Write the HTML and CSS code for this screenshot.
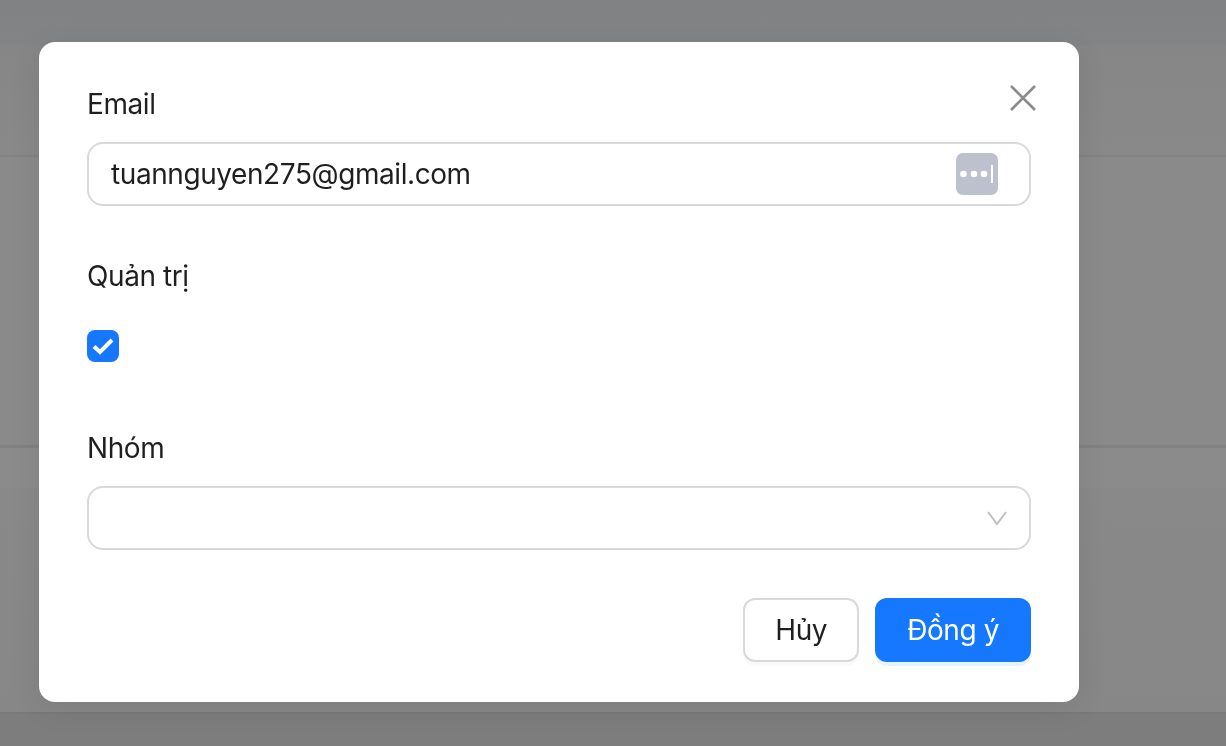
FILE: index.html
```html
<!doctype html>
<html>
	<head>
		<title>Email</title>
		<meta charset="utf-8">
		<link rel="stylesheet" href="styles.css">
	</head>
	<body>
		<!-- trang phía sau -->
		<div class="page">
			<div class="band bandTop"></div>
			<div class="band bandHead"></div>
			<div class="band bandMain"></div>
			<div class="band bandList"></div>
			<div class="band bandFoot"></div>
		</div>

		<div class="overlay">
			<form class="modal">
				<button class="close" type="button" aria-label="Close">
					<svg width="26" height="26" viewBox="0 0 26 26"><path d="M1 1 L25 25 M25 1 L1 25" fill="none" stroke="#8c8c8c" stroke-width="2.6"/></svg>
				</button>

				<div class="field">
					<label class="label">Email</label>
					<div class="control box">
						<span class="value">tuannguyen275@gmail.com</span>
						<svg class="keyIcon" width="42" height="42" viewBox="0 0 42 42">
							<rect width="42" height="42" rx="7" fill="#bdc1ce"/>
							<circle cx="7.5" cy="21" r="3.3" fill="#fff"/>
							<circle cx="18" cy="21" r="3.3" fill="#fff"/>
							<circle cx="28" cy="21" r="3.3" fill="#fff"/>
							<rect x="35" y="12" width="2" height="18" fill="#fff"/>
						</svg>
					</div>
				</div>

				<div class="field">
					<label class="label">Quản trị</label>
					<div class="control">
						<span class="check">
							<svg width="22" height="18" viewBox="0 0 22 18"><path d="M2 9.5 L8 15 L20 3" fill="none" stroke="#fff" stroke-width="4"/></svg>
						</span>
					</div>
				</div>

				<div class="field">
					<label class="label">Nhóm</label>
					<div class="control box">
						<svg class="arrow" width="20" height="14" viewBox="0 0 20 14"><path d="M1 1 L10 13 L19 1" fill="none" stroke="#bfbfbf" stroke-width="2"/></svg>
					</div>
				</div>

				<div class="actions">
					<button class="btn btnCancel" type="button">Hủy</button>
					<button class="btn btnOk" type="button">Đồng ý</button>
				</div>
			</form>
		</div>
	</body>
</html>
```

FILE: styles.css
```css
body{
	margin:0px;
	padding:0px;
	height:746px;
	overflow:hidden;
	font-family:Inter, "Noto Sans", sans-serif;
	background:#868686;
}

/** trang phía sau **/
.page{
	display:flex;
	flex-direction:column;
	height:746px;
}
.band{
	box-sizing:border-box;
}
.bandTop{
	height:45px;
	background:linear-gradient(#808284, #838485);
}
.bandHead{
	height:112px;
	background:linear-gradient(#868686, #898989);
	border-bottom:2px solid #828282;
}
.bandMain{
	height:291px;
	background:#8a8a8a;
	border-bottom:3px solid #818181;
}
.bandList{
	height:266px;
	background:linear-gradient(#8b8b8b 40px, #898989 40px, #878787);
	border-bottom:2px solid #797979;
}
.bandFoot{
	flex:1;
	background:#7d7d7d;
}

/** lớp phủ và hộp thoại **/
.overlay{
	position:fixed;
	top:0;
	left:0;
	right:0;
	bottom:0;
	display:flex;
	align-items:flex-start;
	padding:42px 0 0 39px;
}
.modal{
	position:relative;
	box-sizing:border-box;
	width:1040px;
	height:660px;
	padding:40px 48px;
	background:#fff;
	border-radius:16px;
	box-shadow:0 6px 32px rgba(0,0,0,.08);
	color:rgba(0,0,0,.88);
	font-size:28px;
	line-height:44px;
	letter-spacing:-0.42px;
}
.close{
	position:absolute;
	top:43px;
	right:43px;
	width:26px;
	height:26px;
	padding:0;
	border:0;
	background:none;
	display:flex;
}

.field{
	margin-bottom:48px;
}
.label{
	display:block;
	height:44px;
	margin-bottom:16px;
}
.control{
	display:flex;
	align-items:center;
	height:64px;
}
.box{
	box-sizing:border-box;
	justify-content:space-between;
	padding:0 22px 0 22px;
	border:2px solid #d9d9d9;
	border-radius:16px;
}
.value{
	flex:1;
}
.keyIcon{
	margin-right:9px;
}
.arrow{
	margin-left:auto;
}
.check{
	display:flex;
	align-items:center;
	justify-content:center;
	width:32px;
	height:32px;
	background:#1677ff;
	border-radius:8px;
}

.actions{
	display:flex;
	justify-content:flex-end;
	gap:16px;
}
.btn{
	box-sizing:border-box;
	height:64px;
	padding:0 30px;
	border-radius:12px;
	font-family:inherit;
	font-size:28px;
	letter-spacing:-0.42px;
}
.btnCancel{
	background:#fff;
	border:2px solid #d9d9d9;
	color:rgba(0,0,0,.88);
	box-shadow:0 4px 0 rgba(0,0,0,.02);
}
.btnOk{
	padding:0 32px;
	background:#1677ff;
	border:0;
	color:#fff;
	box-shadow:0 4px 0 rgba(5,145,255,.1);
}
```
